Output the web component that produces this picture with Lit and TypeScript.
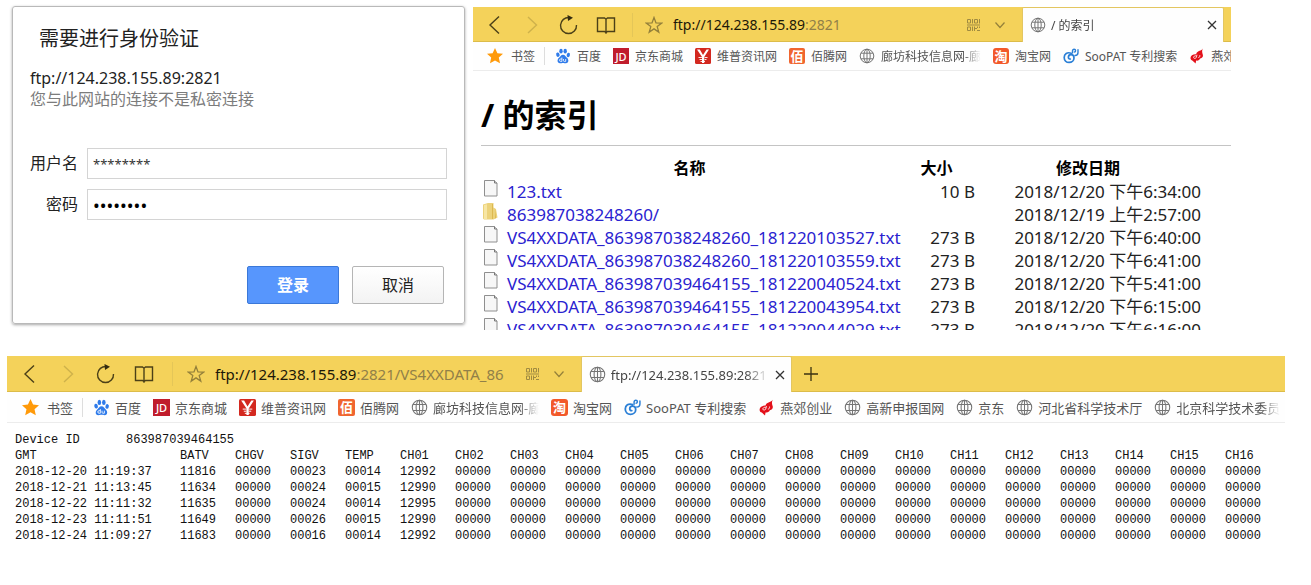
import { LitElement, html, svg, css, nothing, TemplateResult } from "lit";
import { customElement, property } from "lit/decorators.js";

const globe = html`<svg class="ico" viewBox="0 0 16 16" fill="none" stroke="#747474" stroke-width="1">
  <circle cx="8" cy="8" r="6.8"/><ellipse cx="8" cy="8" rx="3.2" ry="6.8"/>
  <path d="M8 1.2v13.6M1.9 5.2h12.2M1.9 10.8h12.2"/></svg>`;

const favicons: Record<string, TemplateResult> = {
  globe,
  star: html`<svg class="ico" viewBox="0 0 16 16"><path fill="#ff9a0a" d="M8 0l2.400 5.200 5.600.6-4.200 3.800 1.200 5.700L8 12.500 3 15.300l1.200-5.700L0 5.800l5.600-.6z"/></svg>`,
  baidu: html`<svg class="ico" viewBox="0 0 16 16" fill="#2f7bea">
    <ellipse cx="2.900" cy="6.700" rx="1.700" ry="2.200" transform="rotate(-15 2.900 6.700)"/>
    <ellipse cx="6" cy="3.200" rx="1.700" ry="2.400"/><ellipse cx="10.200" cy="3.200" rx="1.700" ry="2.400"/>
    <ellipse cx="13.300" cy="7" rx="1.600" ry="2.200" transform="rotate(15 13.300 7)"/>
    <path d="M8 6.800c2.200 0 2.600 2 4.200 3.200 1.700 1.400 1.700 5.200-1.200 5.200-1.200 0-1.800-.3-3-.3s-1.800.3-3 .3c-3 0-3-3.800-1.200-5.200C5.400 8.800 5.800 6.800 8 6.800z"/>
    <path d="M6.900 9.500v3.900H5.700a1.200 1.200 0 0 1 0-2.400h1.200M8.500 11v1.600q0 .8.800.8h1.400V11" fill="none" stroke="#fff" stroke-width=".8"/></svg>`,
  soo: html`<svg class="ico" viewBox="0 0 16 16" fill="none" stroke="#2a7fd6" stroke-linecap="round">
    <path stroke-width="1.700" d="M8.200 5.300C4.200 3.600 1.200 6.200 1.200 9.400c0 3 2.100 5 4.900 5s4.900-2 4.900-4.400c0-2-1.300-3.300-3-3.300-1.500 0-2.600 1.100-2.600 2.500 0 1.200.9 1.900 1.900 1.800"/>
    <path stroke-width="1.400" d="M9.500 5V3c0-1.100.7-1.800 1.600-1.800s1.500.7 1.500 1.500-.5 1.300-1.200 1.300M15 1.800v2.600c0 2-1.200 3.100-3 3.100"/></svg>`,
  flame: html`<svg class="ico" viewBox="0 0 16 16"><path fill="#e3101a" d="M13.800.6c-1 2-3.500 2-5.300 3.300-1 .8-1.300 1.500-1.300 2.300C4 6 1.500 7.500 1.500 10c0 1.500.9 2.400 2.100 2.700l3 2.900.5-3c2 .4 3.500-.6 4-2 2.900-.7 3.300-3 2.500-4.600-.5-1.200-.8-3.200.2-5.400z"/><path fill="none" stroke="#fff" stroke-width=".8" d="M7.300 7.800c-1.700-.2-2.900.7-2.700 1.800.2 1.100 1.700 1 2.600.1l.8-3M9.300 9.500c1.200 0 1.800-.9 1.500-2.400"/></svg>`,
  jd: html`<span class="fav jd">JD</span>`,
  wp: html`<svg class="ico" viewBox="0 0 16 16"><rect width="16" height="16" rx="1.500" fill="#d3281f"/>
    <path fill="#fff" d="M2 1.500h2.800l3.200 5.500 3.600-5.500H14L9.200 9v6H7V9z"/><path stroke="#fff" stroke-width=".9" d="M3.500 9.500H7M4.500 11.500H7M9.500 9.500h3M9.500 11.500h2M5.500 13.500H10"/></svg>`,
  bai: html`<span class="fav bai">佰</span>`,
  tao: html`<span class="fav tao">淘</span>`,
};

const nav: [string, TemplateResult][] = [
  ["后退", svg`<path d="M14 1.500L5 10l9 8.500"/>`],
  ["前进", svg`<path opacity=".22" d="M6 2l8.500 8L6 18"/>`],
  ["刷新", svg`<path d="M10.500 2.600A8 8 0 1 0 17.500 10"/><path fill="#332b10" stroke="none" d="M8.500 0l5.500 2.700L9 6z"/>`],
  ["阅读", svg`<path d="M1.500 3H8.500L10 4.200 11.500 3h7v13.500h-7L10 17.700 8.500 16.500h-7zM10 4.200v14.500"/>`],
];

const marks: [string, string][] = [
  ["baidu", "百度"], ["jd", "京东商城"], ["wp", "维普资讯网"], ["bai", "佰腾网"],
  ["globe", "廊坊科技信息网-廊"], ["tao", "淘宝网"], ["soo", "SooPAT 专利搜索"], ["flame", "燕郊创业"],
  ["globe", "高新申报国网"], ["globe", "京东"], ["globe", "河北省科学技术厅"], ["globe", "北京科学技术委员"],
];

@customElement("browser-window")
class BrowserWindow extends LitElement {
  @property() host = "";
  @property() rest = "";
  @property() tab = "";
  @property({ type: Boolean, reflect: true }) large = false;

  static styles = css`
    :host {
      --cell: 37px; --bar: 35px; --marks: 28px; --icon: 16px; --small: 12px; --gap: 12px; --inner: 6px; --clip: 100px; --addr: 14px;
      display: block; overflow: hidden; min-width: 0;
    }
    :host([large]) { --cell: 38px; --bar: 36px; --marks: 30px; --icon: 17px; --small: 13px; --gap: 12px; --inner: 5px; --clip: 106px; --addr: 15px; }
    button { border: 0; padding: 0; background: none; font: inherit; color: inherit; display: grid; place-items: center; }
    svg { display: block; flex: none; }
    .bar { display: flex; height: var(--bar); box-sizing: border-box; background: #f4d25a; box-shadow: inset 0 -1px #dcbc49; }
    .nav { display: flex; align-items: center; flex: 1; min-width: 0; padding-left: 3px; }
    :host([large]) .nav { flex: 0 0 44.9%; box-sizing: border-box; padding-left: 4px; }
    .cell { width: var(--cell); height: 100%; flex: none; }
    .sep { width: 1px; height: 24px; background: #e4c658; margin: 0 12px 0 8px; flex: none; }
    :host([large]) .sep { margin: 0 14px 0 9px; }
    .addr { flex: 1; min-width: 0; margin-left: 10px; font-size: var(--addr); white-space: nowrap; overflow: hidden; color: #1c1808; }
    .addr span { color: #918048; }
    .tools { display: flex; gap: 14px; padding: 0 16px 0 22px; flex: none; }
    .tab { width: 202px; margin-right: 7px; box-sizing: border-box; flex: none; display: flex; align-items: center; gap: 5px; padding: 0 5px 0 7px; background: #fefefe; border: 1px solid #e3c661; border-bottom: 0; border-radius: 2px 2px 0 0; font-size: var(--small); color: #444; }
    :host([large]) .tab { width: 211px; margin: 0; }
    .tab .label { flex: 1; overflow: hidden; white-space: nowrap; mask-image: linear-gradient(to right, #000 85%, transparent); }
    .plus { width: 38px; }
    .marks { display: flex; align-items: center; height: var(--marks); border-bottom: 1px solid #ececec; background: #fefefe; padding-left: 14px; gap: var(--gap); font-size: var(--small); overflow: hidden; }
    :host([large]) .marks { padding-left: 15px; }
    .marks a { display: flex; align-items: center; gap: var(--inner); flex: none; color: #555; text-decoration: none; white-space: nowrap; }
    .marks .home { gap: 8px; padding-right: 9px; border-right: 1px solid #ddd; margin-right: -2px; }
    .marks .fade { max-width: var(--clip); overflow: hidden; mask-image: linear-gradient(to right, #000 82%, transparent); }
    .ico { width: var(--icon); height: var(--icon); }
    .fav { width: var(--icon); height: var(--icon); display: grid; place-items: center; overflow: hidden; color: #fff; line-height: 1; font-weight: 700; }
    .jd { background: #c01c2c; font-size: 11px; font-weight: 500; }
    .bai { background: #f0652f; border-radius: 2px; font-size: 13px; }
    .tao { background: #f2592a; border-radius: 3px; font-size: 13px; }
  `;

  render() {
    return html`
      <div class="bar">
        <div class="nav">
          ${nav.map(([n, d]) => html`<button class="cell" aria-label=${n}>
            <svg width="20" height="20" viewBox="0 0 20 20" fill="none" stroke="#4b4018" stroke-width="1.400">${d}</svg></button>`)}
          <div class="sep"></div>
          <button aria-label="收藏"><svg width="18" height="18" viewBox="0 0 18 18" fill="none" stroke="#94803a" stroke-width="1.300"><path d="M9 1.500l2 5.400 5.700.2-4.500 3.500 1.600 5.500L9 12.900l-4.800 3.200 1.600-5.500L1.300 7.100 7 6.900z"/></svg></button>
          <div class="addr">${this.host}<span>${this.rest}</span></div>
          <div class="tools">
            <button aria-label="二维码"><svg width="13" height="12" viewBox="0 0 13 12" fill="none" stroke="#a08b41"><path d="M.5.500h3v3.500h-3zM5.500 0v4.500M7.500.500h3v3.500h-3zM12.500 0v4.500M0 6h13M.5 8h3v3.500h-3zM5.500 7.500v4.500M7.500 7.500v4.500M8 9.500h2M10.500 7.500v1.500M12.500 7.500v1.500M10 11.500h3"/></svg></button>
            <button aria-label="展开"><svg width="12" height="12" viewBox="0 0 12 12" fill="none" stroke="#94803a" stroke-width="1.200"><path d="M1.500 3.500L6 8.500l4.500-5"/></svg></button>
          </div>
        </div>
        <div class="tab">${globe}<span class="label">${this.tab}</span>
          <button aria-label="关闭"><svg width="12" height="12" viewBox="0 0 12 12" stroke="#333" stroke-width="1.300"><path d="M2 2l8 8M10 2l-8 8"/></svg></button></div>
        ${this.large ? html`<button class="plus" aria-label="新标签页"><svg width="14" height="14" viewBox="0 0 14 14" stroke="#3a3212" stroke-width="1.300"><path d="M7 0v14M0 7h14"/></svg></button>` : nothing}
      </div>
      <nav class="marks">
        <a class="home" href="#">${favicons.star}书签</a>
        ${marks.map(([k, t]) => html`<a href="#">${favicons[k]}<span class=${/-|委员/.test(t) ? "fade" : ""}>${t}</span></a>`)}
      </nav>
      <slot></slot>`;
  }
}

const files: [string, string, string][] = [
  ["123.txt", "10 B", "2018/12/20 下午6:34:00"],
  ["863987038248260/", "", "2018/12/19 上午2:57:00"],
  ["VS4XXDATA_863987038248260_181220103527.txt", "273 B", "2018/12/20 下午6:40:00"],
  ["VS4XXDATA_863987038248260_181220103559.txt", "273 B", "2018/12/20 下午6:41:00"],
  ["VS4XXDATA_863987039464155_181220040524.txt", "273 B", "2018/12/20 下午5:41:00"],
  ["VS4XXDATA_863987039464155_181220043954.txt", "273 B", "2018/12/20 下午6:15:00"],
  ["VS4XXDATA_863987039464155_181220044029.txt", "273 B", "2018/12/20 下午6:16:00"],
];

const fileIcon = html`<svg width="16" height="17" viewBox="0 0 16 17"><path fill="#f7f7f7" stroke="#8f8f8f" d="M1.500.500h10l2.500 2.500v13h-12.500z"/><path fill="#ddd" stroke="#777" d="M11.500.500v2.500h2.500"/></svg>`;
const folderIcon = html`<svg width="16" height="17" viewBox="0 0 16 17"><path fill="#ecd27a" d="M0 1.500L5 0h5.500v4.500l2.500 1.500 1.500 8.500-4 2H1l-1-1z"/><path fill="#f7e6a4" d="M1 2l3-.8V16H1z"/><path fill="#dcb850" d="M9 1h1v15H9zM12 6l1 9-1 .5z"/></svg>`;

const readings: [string, string, string, string, string][] = [
  ["2018-12-20 11:19:37", "11816", "00023", "00014", "12992"],
  ["2018-12-21 11:13:45", "11634", "00024", "00015", "12990"],
  ["2018-12-22 11:11:32", "11635", "00024", "00014", "12995"],
  ["2018-12-23 11:11:51", "11649", "00026", "00015", "12990"],
  ["2018-12-24 11:09:27", "11683", "00016", "00014", "12992"],
];
const channels = Array.from({ length: 16 }, (_, i) => "CH" + String(i + 1).padStart(2, "0"));

@customElement("app-root")
class AppRoot extends LitElement {
  static styles = css`
    :host { display: block; background: #fff; color: #222; padding-top: 6px; font-family: "Noto Sans", "Noto Sans CJK SC", sans-serif; }
    .top { display: grid; grid-template-columns: 453fr 758fr; gap: 8px; padding: 0 80px 0 12px; height: 324px; align-items: start; }
    .dialog { box-sizing: border-box; border: 1px solid #b9b9b9; border-radius: 3px; box-shadow: 0 1px 3px rgba(0,0,0,.35); padding: 18px 17px 19px; font-size: 16px; line-height: 21px; }
    .dialog h2 { margin: 0 0 15px 9px; font-size: 20px; line-height: 28px; font-weight: 400; }
    .dialog p { margin: 0; }
    .muted { color: #7c7c7c; }
    .fields { display: grid; grid-template-columns: 48px 1fr; gap: 10px 9px; align-items: center; margin: 38px 0 46px; }
    label { text-align: right; white-space: nowrap; }
    input { box-sizing: border-box; width: 100%; min-width: 0; height: 31px; border: 1px solid #d4d4d4; padding: 0 5px; font: 13px "Noto Sans", sans-serif; color: #333; background: #fff; }
    .secret { font-size: 18px; color: #000; }
    .buttons { display: flex; justify-content: flex-end; gap: 13px; padding-right: 3px; }
    .buttons button { width: 92px; height: 38px; box-sizing: border-box; border: 1px solid #b5b5b5; border-radius: 2px; background: linear-gradient(#fff, #f3f3f3); font: inherit; color: #222; padding: 0; }
    .buttons .primary { background: #5796fd; border-color: #3b78d8; color: #fff; font-weight: 700; }
    .index { margin-top: 1px; height: 323px; }
    .listing { padding-left: 8px; }
    .listing h1 { margin: 0; padding: 20px 0 6px; font-size: 32px; line-height: 48px; font-weight: 700; color: #000; border-bottom: 1px solid #c4c4c4; }
    .files { margin-top: 11px; border-collapse: collapse; table-layout: fixed; width: 720px; font-size: 17px; line-height: 23px; }
    .files th, .files td { padding: 0; white-space: nowrap; height: 23px; }
    .files th { color: #000; font-size: 16px; font-weight: 700; }
    .c-name { width: 417px; } .c-size { width: 77px; } .c-date { width: 226px; }
    .files a { display: flex; gap: 8px; padding-left: 2px; color: #2a22d0; text-decoration: none; }
    .files svg { flex: none; }
    .files .size, .files .date { text-align: right; }
    .log { margin: 26px 26px 0 7px; }
    .data { padding: 9px 5px 0 8px; font: 12px/16px "Liberation Mono", monospace; color: #111; }
    .device { display: flex; }
    .device span { width: 111px; }
    .data table { width: 100%; table-layout: fixed; border-collapse: collapse; }
    .data th, .data td { padding: 0; text-align: left; font-weight: 400; white-space: nowrap; }
    .data .gmt { width: 165px; }
  `;

  render() {
    return html`
      <div class="top">
        <form class="dialog" @submit=${(e: Event) => e.preventDefault()}>
          <h2>需要进行身份验证</h2>
          <p>ftp://124.238.155.89:2821</p>
          <p class="muted">您与此网站的连接不是私密连接</p>
          <div class="fields">
            <label for="user">用户名</label><input id="user" .value=${"********"}>
            <label for="pass">密码</label><input id="pass" class="secret" type="password" .value=${"password"}>
          </div>
          <div class="buttons"><button class="primary">登录</button><button type="button">取消</button></div>
        </form>
        <browser-window class="index" host="ftp://124.238.155.89" rest=":2821" tab="/ 的索引">
          <div class="listing">
            <h1>/ 的索引</h1>
            <table class="files">
              <thead><tr><th class="c-name">名称</th><th class="c-size">大小</th><th class="c-date">修改日期</th></tr></thead>
              <tbody>${files.map(([n, s, d]) => html`<tr>
                <td><a href="#">${n.endsWith("/") ? folderIcon : fileIcon}${n}</a></td>
                <td class="size">${s}</td><td class="date">${d}</td></tr>`)}</tbody>
            </table>
          </div>
        </browser-window>
      </div>
      <browser-window class="log" large host="ftp://124.238.155.89" rest=":2821/VS4XXDATA_863987039464155" tab="ftp://124.238.155.89:2821">
        <div class="data">
          <div class="device"><span>Device ID</span>863987039464155</div>
          <table>
            <thead><tr><th class="gmt">GMT</th>${["BATV", "CHGV", "SIGV", "TEMP", ...channels].map((c) => html`<th>${c}</th>`)}</tr></thead>
            <tbody>${readings.map(([t, b, s, temp, c]) => html`<tr>
              ${[t, b, "00000", s, temp, c, ...Array(15).fill("00000")].map((v) => html`<td>${v}</td>`)}</tr>`)}</tbody>
          </table>
        </div>
      </browser-window>`;
  }
}
